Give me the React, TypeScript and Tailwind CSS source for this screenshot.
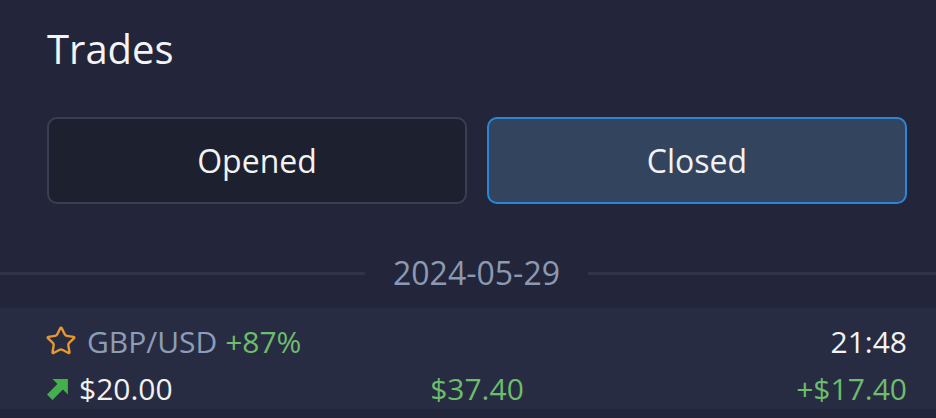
import React from 'react';
import { Star } from 'lucide-react';

const ArrowUpRight = () => (
    <svg width="22" height="22" viewBox="0 0 20 20" className="shrink-0">
        <polygon points="5,1 19,1 19,15 14.5,10.5 5,20 0,15 9.5,5.5" fill="#43b04c" />
    </svg>
);

const TradeRow = () => (
    <div className="bg-[#282c42] pl-[47px] pr-[29px] pt-[14px]">
        <div className="flex items-center justify-between text-[30px] leading-[40px]">
            <div className="flex items-center gap-[10px]">
                <Star size={32} strokeWidth={1.8} color="#e8982c" className="-ml-[2px] -mt-[3px]" />
                <span className="text-[#8d9db8]">
                    GBP/USD <span className="text-[#6cbd6c]">+87%</span>
                </span>
            </div>
            <span className="text-[#f2f2f2]">21:48</span>
        </div>
        <div className="mt-[7px] grid grid-cols-3 items-center text-[30px] leading-[40px]">
            <div className="flex items-center gap-[10px]">
                <ArrowUpRight />
                <span className="text-[#f2f2f2]">$20.00</span>
            </div>
            <span className="text-center text-[#6cbd6c]">$37.40</span>
            <span className="text-right text-[#6cbd6c]">+$17.40</span>
        </div>
    </div>
);

const App = () => {
    return (
        <div className="h-[418px] w-full overflow-hidden bg-[#23263a] font-['Open_Sans',sans-serif]">
            <div className="pl-[47px] pt-[22px]">
                <h1 className="text-[40px] leading-[54px] text-[#f4f4f4]">Trades</h1>
            </div>

            <div className="mt-[41px] grid grid-cols-2 gap-[20px] pl-[47px] pr-[29px]">
                <button className="h-[87px] rounded-[10px] border-2 border-[#393f53] bg-[#1d202f] text-[32px] text-[#f2f2f2]">
                    Opened
                </button>
                <button className="h-[87px] rounded-[10px] border-2 border-[#2a87d6] bg-[#33445f] text-[32px] text-[#f2f2f2]">
                    Closed
                </button>
            </div>

            <div className="mt-[47px] mb-[13px] flex h-[44px] items-center gap-[28px]">
                <div className="h-[3px] w-[365px] bg-[#2f3447]" />
                <span className="text-[32px] leading-[44px] text-[#8b9ab3]">2024-05-29</span>
                <div className="h-[3px] flex-1 bg-[#2f3447]" />
            </div>

            <TradeRow />
        </div>
    );
};

export default App;
